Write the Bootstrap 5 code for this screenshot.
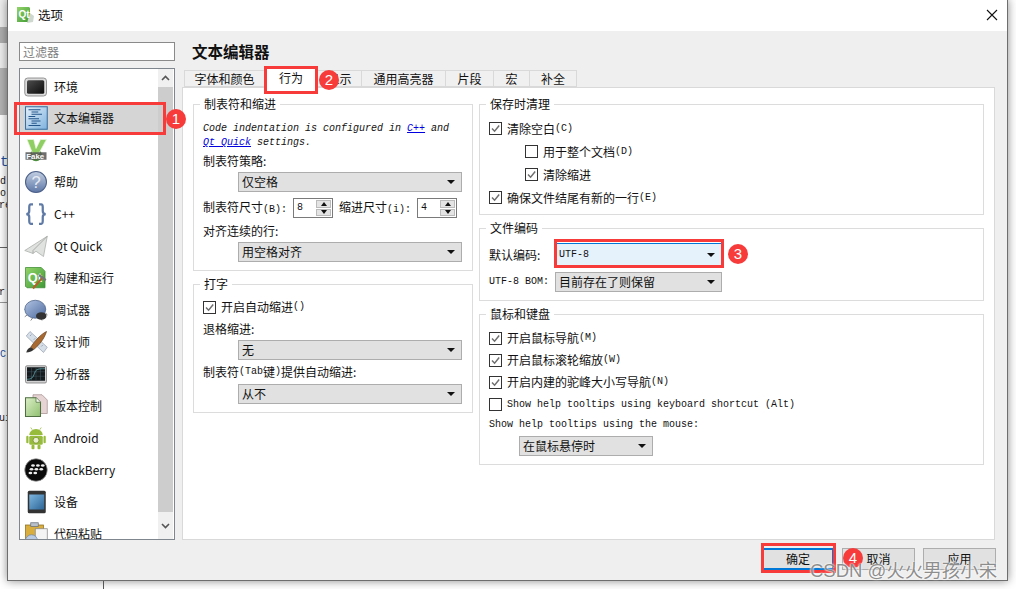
<!DOCTYPE html>
<html lang="zh-CN">
<head>
<meta charset="utf-8">
<title>选项</title>
<link href="https://cdn.jsdelivr.net/npm/bootstrap@5.3.0/dist/css/bootstrap.min.css" rel="stylesheet">
<style>
html,body{height:589px;overflow:hidden;background:#fff}
body{position:relative;font:12px/16px "Noto Sans CJK SC","Liberation Sans",sans-serif;color:#111}
.mn{font:10px/16px "Liberation Mono","Noto Sans CJK SC",monospace}
.desk{height:589px;overflow:hidden}
.strip{width:7px;flex:none;overflow:hidden;font:10px/12px "Liberation Mono",monospace;color:#222;white-space:nowrap}
.b1{height:27px;background:#eee}.b2{height:16px;background:#aeaeae}.b3{height:25px;background:#eee}.b4{height:47px;background:#b4b4b4}
.s-t{margin-top:39px;font-size:14px;line-height:16px;color:#1c4fa0}.s-d{margin-top:6px}.s-o{}.s-r{margin-left:-1px}
.s-line{margin-top:35px;border-top:1px solid #666}.s-r2{margin-top:39px;margin-left:-1px}.s-line2{margin-top:3px;border-top:1px solid #999}
.s-c{margin-top:46px;color:#1c4fa0}.s-u{margin-top:52px;margin-left:-1px}
.dlgcol{width:1001px;flex:none;position:relative}
.under{height:8px;margin-left:96px;border-left:1px solid #555}
.dlg{height:582px;margin-top:-1px;background:#efefef;border:1px solid #6e6e6e;box-shadow:0 0 9px rgba(0,0,0,.45)}
.dtitle{height:31px;background:#fff;padding:0 9px 2px 8px}
.dtitle svg.ti{margin-right:2px}
.dtitle .ttext{font-size:12.5px}
.dclose{margin-left:auto;background:none;border:0;padding:0;line-height:0}
.dmain{padding:11px 12px 0 11px}
.lcol{width:156px;flex:none;margin-right:7px}
.filter.form-control{height:19px;padding:0 3px;font-size:12px;line-height:16px;border:1px solid #8a8a8a;border-radius:0;background:#fff;box-shadow:none}
.filter::placeholder{color:#7d7d7d;opacity:1}
.catbox{height:472px;margin-top:7px;background:#fff;border:1px solid #7f868e;overflow:hidden}
.catlist.list-group{width:138px;border-radius:0;padding-top:2px;flex:none;height:470px;overflow:hidden;flex-wrap:nowrap}
.catlist .list-group-item{height:32px;flex:none;border:0;border-radius:0;padding:0 0 0 4px;background:transparent;color:#111;font-size:12px;display:flex;align-items:center;gap:6px}
.catlist .list-group-item.active{background:#d5d5d5;color:#111}
.cat-ic{width:24px;height:24px;flex:none}
.vbar{width:15px;flex:none;background:#f0f0f0;display:flex;flex-direction:column;align-items:center}
.vbtn{height:18px;flex:none;display:flex;align-items:center;justify-content:center;width:15px}
.vthumb{height:425px;width:15px;background:#cdcdcd;flex:none}
.rcol{width:813px;flex:none}
.pagehead{height:26px;font-size:15.5px;line-height:18px;font-weight:700;margin:0 0 0 10px;color:#111;padding-top:0}
.qtabs.nav-tabs{height:19px;padding-left:3px;border-bottom:0;flex-wrap:nowrap;align-items:flex-end;position:relative;z-index:2}
.qtabs .nav-link{height:17px;margin:0 0 0 -1px;padding:0;border:1px solid #d9d9d9;border-bottom:1px solid #d9d9d9;border-radius:0;background:#f0f0f0;color:#111;font-size:12px;line-height:15px;text-align:center}
.qtabs .nav-link.active{height:21px;margin-bottom:-1px;background:#fff;border-color:#d9d9d9 #d9d9d9 #fff;color:#111;line-height:20px}
.t1{width:81px}.t2{width:54px}.t3{width:45px}.t4{width:85px}.t5{width:49px}.t6{width:37px}.t7{width:48px}
.pane{height:453px;background:#fff;border:1px solid #d9d9d9;padding:8px 10px 0 10px}
.col-l{width:280px;flex:none;margin-right:6px}
.col-r{width:505px;flex:none}
.gbox{border:1px solid #dcdcdc;min-width:0;padding:0 9px;display:block}
.gbox legend{float:none;width:auto;height:16px;margin:0 0 0 -3px;padding:0 4px;font-size:12px;line-height:16px;color:#111}
.gap5{margin-top:5px}
.g1{padding-top:10px;padding-bottom:8px}
.g2{padding-top:4px;padding-bottom:8px}
.g3{padding-top:5px;padding-bottom:5px}
.g4{padding-top:7px;padding-bottom:8px}
.g5{padding-top:5px;padding-bottom:8px}
.itl{font:italic 10px/14px "Liberation Mono",monospace;color:#111;white-space:nowrap}
.itl a{color:#0000e0;text-decoration:underline}
.lrow{height:22px;display:flex;align-items:center;white-space:nowrap}
.lrow1{height:21px}
.lrow2{margin-top:1px}.lrow3{margin-top:2px}
.lrow-short{height:18px}
.mnrow{padding-top:2px}
.rrow{height:23px}
.qcombo{height:20px;background:#e1e1e1;border:1px solid #adadad;display:flex;align-items:center;justify-content:space-between;padding:0 5px 0 3px;font-size:12px;white-space:nowrap}
.qcombo::after{content:"";width:0;height:0;border:4px solid transparent;border-top:4px solid #111;border-bottom:0;margin-left:auto;margin-right:1px}
.c-l{width:224px;margin-left:35px}
.c-r{width:167px}
.c-h{width:134px;margin:3px 0 0 30px}
.c-f{height:23px;background:#e5f1fb;border-color:#0078d7;font:10px/16px "Liberation Mono",monospace}
.lab66{width:66px;flex:none}
.mt6{margin-top:6px}
.spinrow{height:20px;margin-top:6px;display:flex;align-items:center;white-space:nowrap}
.qspin{width:40px;height:20px;border:1px solid #7a7a7a;background:#fff;display:flex;align-items:stretch;justify-content:space-between;padding:1px;flex:none}
.qspin span.v{padding-left:2px;line-height:16px}
.qspin .ud{width:15px;display:flex;flex-direction:column;gap:1px}
.ud i{flex:1;background:#e4e4e4;border:1px solid #bbb;display:flex;align-items:center;justify-content:center}
.ud i::after{content:"";border:3px solid transparent}
.ud i.up::after{border-top:0;border-bottom:4px solid #111}
.ud i.dn::after{border-bottom:0;border-top:4px solid #111}
.spl1{width:90px;flex:none}.spl2{width:78px;flex:none;margin-left:6px}
.qchk{width:13px;height:13px;background:#fff;border:1px solid #333;display:inline-flex;flex:none;margin-right:5px;align-items:center;justify-content:center;line-height:0}
.ind{margin-left:36px}
.btnrow{padding:8px 0 0;margin-right:-1px;justify-content:flex-end;gap:8px}
.qbtn.btn{width:73px;height:22px;padding:0;background:#e1e1e1;border:1px solid #adadad;border-radius:0;color:#111;font-size:12px;line-height:20px;box-shadow:none}
.qbtn.btn.def{width:70px;margin-right:1px;border-color:#0078d7;border-width:2px 1px;line-height:18px}
.rmark{position:absolute;border:3px solid #f73b3b;pointer-events:none;z-index:5}
.m1{left:14px;top:102px;width:152px;height:33px}
.m2{left:264px;top:66px;width:54px;height:28px}
.m3{left:554px;top:239px;width:170px;height:29px}
.m4{left:761px;top:543px;width:75px;height:30px}
.rdot{position:absolute;width:20px;height:20px;border-radius:50%;background:#f73b3b;color:#fff;font:400 15px/20px "Liberation Sans",sans-serif;text-align:center;z-index:6}
.d1{left:166px;top:109px}.d2{left:319px;top:70px}.d3{left:728px;top:244px}.d4{left:843px;top:548px}
.wmark{position:absolute;left:810px;top:558px;font:18.5px/26px "Liberation Sans","Noto Sans CJK SC",sans-serif;color:rgba(105,105,105,.75);text-shadow:0 0 2px #fff,0 0 2px #fff;white-space:nowrap;z-index:7}
</style>
</head>
<body>
<svg width="0" height="0" class="position-absolute">
<defs>
<symbol id="ck" viewBox="0 0 11 11"><path d="M2 5.5 4.6 8.2 9.2 2.6" fill="none" stroke="#6f6f6f" stroke-width="1.5"/></symbol>
<linearGradient id="gScr" x1="0" y1="0" x2="1" y2="1"><stop offset="0" stop-color="#4d4d4d"/><stop offset="1" stop-color="#0c0c0c"/></linearGradient>
<linearGradient id="gDoc" x1="0" y1="0" x2="1" y2="1"><stop offset="0" stop-color="#e4f0fb"/><stop offset="1" stop-color="#7fb2dd"/></linearGradient>
<linearGradient id="gHelp" x1="0" y1="0" x2="0" y2="1"><stop offset="0" stop-color="#c3cfe2"/><stop offset="1" stop-color="#5d77a6"/></linearGradient>
<linearGradient id="gQt" x1="0" y1="0" x2="1" y2="1"><stop offset="0" stop-color="#93d46a"/><stop offset="1" stop-color="#3f9a35"/></linearGradient>
<linearGradient id="gBug" x1="0" y1="0" x2="1" y2="1"><stop offset="0" stop-color="#b2c4e2"/><stop offset="1" stop-color="#4c6a9f"/></linearGradient>
<linearGradient id="gTab" x1="0" y1="0" x2="1" y2="1"><stop offset="0" stop-color="#7db5df"/><stop offset="1" stop-color="#2c6596"/></linearGradient>
<linearGradient id="gPg" x1="0" y1="0" x2="1" y2="1"><stop offset="0" stop-color="#dcefc7"/><stop offset="1" stop-color="#8fbf70"/></linearGradient>
</defs>
</svg>
<div class="desk d-flex">
  <div class="strip">
    <div class="b1"></div><div class="b2"></div><div class="b3"></div><div class="b4"></div>
    <div class="s-t">t</div>
    <div class="s-d">d</div><div class="s-o">o</div><div class="s-r">re</div>
    <div class="s-line"></div><div class="s-r2">r</div><div class="s-line2"></div>
    <div class="s-c">C</div><div class="s-u">ui</div>
  </div>
  <div class="dlgcol">
    <div class="dlg">
      <div class="dtitle d-flex align-items-center">
        <svg class="ti" width="20" height="18" viewBox="0 0 20 18"><path d="M1 1h12l1 1v11l-2 3H1z" fill="url(#gQt)"/><path d="M14 7l4 3-1 6-6 1z" fill="#cfd8cf"/><text x="2.5" y="12" font-family="Liberation Sans" font-weight="700" font-size="10" fill="#fff">Qt</text></svg>
        <span class="ttext">选项</span>
        <button class="dclose" type="button" aria-label="关闭"><svg width="12" height="12" viewBox="0 0 12 12"><path d="M1 1 11 11M11 1 1 11" stroke="#111" stroke-width="1.1"/></svg></button>
      </div>
      <div class="dmain d-flex">
        <div class="lcol">
          <input class="form-control filter" type="text" placeholder="过滤器">
          <div class="catbox d-flex">
            <div class="list-group catlist">
              <div class="list-group-item"><svg class="cat-ic" viewBox="0 0 32 32"><rect x="1" y="4" width="29" height="24" rx="4" fill="#dcdcdc" stroke="#777"/><rect x="4" y="7" width="23" height="18" rx="2" fill="url(#gScr)"/></svg>环境</div>
              <div class="list-group-item active"><svg class="cat-ic" viewBox="0 0 32 32"><rect x="2" y="1" width="29" height="30" fill="url(#gDoc)" stroke="#3b6fa0" stroke-width="1.4"/><path d="M6 5h16M10 8h9M10 11h14M6 14h9M6 17h14M10 20h12M10 23h7M6 26h16" stroke="#24558a" stroke-width="1.5"/></svg>文本编辑器</div>
              <div class="list-group-item"><svg class="cat-ic" viewBox="0 0 32 32"><circle cx="16" cy="23" r="8" fill="#4c8f3c"/><path d="M4 2h9l3 12 6-12h8L19 22h-7z" fill="#8fce62" stroke="#e9f5df"/><rect x="2" y="19" width="28" height="10" fill="#555" opacity=".85"/><text x="3" y="28" font-family="Liberation Sans" font-weight="700" font-size="10.5" fill="#fff">Fake</text></svg>FakeVim</div>
              <div class="list-group-item"><svg class="cat-ic" viewBox="0 0 32 32"><circle cx="16" cy="16" r="14" fill="url(#gHelp)" stroke="#4d618a" stroke-width="1.4"/><text x="16" y="24" text-anchor="middle" font-family="Liberation Sans" font-size="22" fill="#e6ebf3">?</text></svg>帮助</div>
              <div class="list-group-item"><svg class="cat-ic" viewBox="0 0 32 32"><g fill="none" stroke="#5f7aa5" stroke-width="3"><path d="M12 3H9C7 3 7 5 7 7v5c0 3-2 4-4 4 2 0 4 1 4 4v5c0 2 0 4 2 4h3"/><path d="M20 3h3c2 0 2 2 2 4v5c0 3 2 4 4 4-2 0-4 1-4 4v5c0 2 0 4-2 4h-3"/></g></svg>C++</div>
              <div class="list-group-item"><svg class="cat-ic" viewBox="0 0 32 32"><path d="M1 22 31 3 26 30 16 23 12 26z" fill="#dfe2df" stroke="#a8aca8"/><path d="M31 3 12 22v4" fill="none" stroke="#999"/></svg>Qt Quick</div>
              <div class="list-group-item"><svg class="cat-ic" viewBox="0 0 32 32"><path d="M2 2h21l5 5v22H4l-2-2z" fill="url(#gQt)" stroke="#3c8c33"/><text x="5" y="21" font-family="Liberation Sans" font-weight="700" font-size="17" fill="#fff">Qt</text><path d="M12 30 25 15" stroke="#b5622a" stroke-width="2.6"/><path d="M20 12l9 7" stroke="#777" stroke-width="3"/></svg>构建和运行</div>
              <div class="list-group-item"><svg class="cat-ic" viewBox="0 0 32 32"><path d="M4 18 1 15M5 22 1 25M12 26l-3 4M22 27l2 3M29 20l2 3" stroke="#777" stroke-width="1.2"/><ellipse cx="15" cy="15" rx="14" ry="12" fill="url(#gBug)" stroke="#4a5f85"/><ellipse cx="23" cy="24" rx="7" ry="5" fill="#333"/></svg>调试器</div>
              <div class="list-group-item"><svg class="cat-ic" viewBox="0 0 32 32"><path d="M3 8 8 2 31 23 26 30z" fill="#d6dee8" stroke="#9aa6b4"/><path d="M8 8l2-2M13 13l2-2M18 17l2-2M23 22l2-2" stroke="#8794a3"/><path d="M30 2C22 6 14 15 9 23l4 3C20 20 27 12 30 2z" fill="#a86a31" stroke="#6d431c"/><path d="M9 23c-3 1-5 3-6 7 4 0 7-1 10-4z" fill="#333"/></svg>设计师</div>
              <div class="list-group-item"><svg class="cat-ic" viewBox="0 0 32 32"><rect x="2" y="5" width="28" height="23" rx="2" fill="#d0d0d0" stroke="#777"/><rect x="4" y="7" width="24" height="18" fill="#151a1c"/><path d="M10 7v18M16 7v18M22 7v18M4 13h24M4 19h24" stroke="#3e5560" stroke-width=".7"/><path d="M4 23c6 0 8-2 10-8s5-6 14-6" fill="none" stroke="#65b0b8"/></svg>分析器</div>
              <div class="list-group-item"><svg class="cat-ic" viewBox="0 0 32 32"><path d="M12 1h12l7 7v18H12z" fill="#e6d3d3" stroke="#a79090"/><path d="M2 5h14l6 6v19H2z" fill="url(#gPg)" stroke="#4f6e41" stroke-width="1.4"/><path d="M16 5v6h6" fill="#f2f8ea" stroke="#4f6e41"/></svg>版本控制</div>
              <div class="list-group-item"><svg class="cat-ic" viewBox="0 0 32 32"><g fill="#97bb3b"><path d="M7 12a9 8 0 0 1 18 0z"/><rect x="7" y="13" width="18" height="12" rx="2"/><rect x="3" y="13" width="3" height="10" rx="1.5"/><rect x="26" y="13" width="3" height="10" rx="1.5"/><rect x="10" y="25" width="4" height="6" rx="1.5"/><rect x="18" y="25" width="4" height="6" rx="1.5"/></g><path d="M11 5 9 2M21 5l2-3" stroke="#97bb3b"/><circle cx="16" cy="19" r="4" fill="#e8edd0" stroke="#6f8a2a"/></svg>Android</div>
              <div class="list-group-item"><svg class="cat-ic" viewBox="0 0 32 32"><circle cx="16" cy="16" r="15" fill="#0b0b0b" stroke="#999"/><g fill="#eee"><ellipse cx="12" cy="10" rx="2.5" ry="1.7"/><ellipse cx="18.5" cy="10" rx="2.5" ry="1.7"/><ellipse cx="25" cy="10" rx="2.5" ry="1.7"/><ellipse cx="10" cy="15" rx="2.5" ry="1.7"/><ellipse cx="16.5" cy="15" rx="2.5" ry="1.7"/><ellipse cx="23" cy="15" rx="2.5" ry="1.7"/><ellipse cx="8.5" cy="20" rx="2.5" ry="1.7"/><ellipse cx="15" cy="20" rx="2.5" ry="1.7"/></g></svg>BlackBerry</div>
              <div class="list-group-item"><svg class="cat-ic" viewBox="0 0 32 32"><rect x="5" y="1" width="24" height="30" rx="2" fill="#333"/><rect x="7" y="6" width="20" height="20" fill="url(#gTab)"/></svg>设备</div>
              <div class="list-group-item"><svg class="cat-ic" viewBox="0 0 32 32"><rect x="2" y="4" width="24" height="27" fill="#d9ad3e" stroke="#8e6d1e"/><rect x="9" y="1" width="10" height="5" fill="#b9c2cc" stroke="#6a7078"/><rect x="15" y="9" width="16" height="20" fill="#f4f4f4" stroke="#888"/><circle cx="10" cy="25" r="8" fill="#b9cbe3" stroke="#7288a8"/></svg>代码粘贴</div>
            </div>
            <div class="vbar">
              <div class="vbtn"><svg width="9" height="6" viewBox="0 0 9 6"><path d="M1 5 4.5 1.5 8 5" fill="none" stroke="#555" stroke-width="1.6"/></svg></div>
              <div class="vthumb"></div>
              <div class="vbtn flex-grow-1"><svg width="9" height="6" viewBox="0 0 9 6"><path d="M1 1 4.5 4.5 8 1" fill="none" stroke="#555" stroke-width="1.6"/></svg></div>
            </div>
          </div>
        </div>
        <div class="rcol">
          <h1 class="pagehead">文本编辑器</h1>
          <ul class="nav nav-tabs qtabs">
            <li class="nav-item"><a class="nav-link t1" href="#">字体和颜色</a></li>
            <li class="nav-item"><a class="nav-link active t2" href="#">行为</a></li>
            <li class="nav-item"><a class="nav-link t3" href="#">显示</a></li>
            <li class="nav-item"><a class="nav-link t4" href="#">通用高亮器</a></li>
            <li class="nav-item"><a class="nav-link t5" href="#">片段</a></li>
            <li class="nav-item"><a class="nav-link t6" href="#">宏</a></li>
            <li class="nav-item"><a class="nav-link t7" href="#">补全</a></li>
          </ul>
          <div class="pane d-flex">
            <div class="col-l">
              <fieldset class="gbox g1">
                <legend>制表符和缩进</legend>
                <div class="itl">Code indentation is configured in <a href="#">C++</a> and</div>
                <div class="itl"><a href="#">Qt Quick</a> settings.</div>
                <div class="lrow lrow1">制表符策略:</div>
                <div class="qcombo c-l lrow2">仅空格</div>
                <div class="spinrow">
                  <span class="spl1">制表符尺寸<span class="mn">(B):</span></span>
                  <div class="qspin"><span class="v mn">8</span><span class="ud"><i class="up"></i><i class="dn"></i></span></div>
                  <span class="spl2">缩进尺寸<span class="mn">(i):</span></span>
                  <div class="qspin"><span class="v mn">4</span><span class="ud"><i class="up"></i><i class="dn"></i></span></div>
                </div>
                <div class="lrow lrow3">对齐连续的行:</div>
                <div class="qcombo c-l">用空格对齐</div>
              </fieldset>
              <fieldset class="gbox g2 gap5">
                <legend>打字</legend>
                <div class="lrow"><span class="qchk"><svg width="11" height="11"><use href="#ck"/></svg></span>开启自动缩进<span class="mn">()</span></div>
                <div class="lrow">退格缩进:</div>
                <div class="qcombo c-l">无</div>
                <div class="lrow lrow2">制表符<span class="mn">(Tab</span>键<span class="mn">)</span>提供自动缩进:</div>
                <div class="qcombo c-l lrow2">从不</div>
              </fieldset>
            </div>
            <div class="col-r">
              <fieldset class="gbox g3">
                <legend>保存时清理</legend>
                <div class="lrow rrow"><span class="qchk"><svg width="11" height="11"><use href="#ck"/></svg></span>清除空白<span class="mn">(C)</span></div>
                <div class="lrow rrow ind"><span class="qchk"></span>用于整个文档<span class="mn">(D)</span></div>
                <div class="lrow rrow ind"><span class="qchk"><svg width="11" height="11"><use href="#ck"/></svg></span>清除缩进</div>
                <div class="lrow rrow"><span class="qchk"><svg width="11" height="11"><use href="#ck"/></svg></span>确保文件结尾有新的一行<span class="mn">(E)</span></div>
              </fieldset>
              <fieldset class="gbox g4 gap5">
                <legend>文件编码</legend>
                <div class="d-flex align-items-center"><span class="lab66">默认编码:</span><div class="qcombo c-r c-f">UTF-8</div></div>
                <div class="d-flex align-items-center mt6"><span class="lab66 mn">UTF-8 BOM:</span><div class="qcombo c-r">目前存在了则保留</div></div>
              </fieldset>
              <fieldset class="gbox g5 gap5">
                <legend>鼠标和键盘</legend>
                <div class="lrow"><span class="qchk"><svg width="11" height="11"><use href="#ck"/></svg></span>开启鼠标导航<span class="mn">(M)</span></div>
                <div class="lrow"><span class="qchk"><svg width="11" height="11"><use href="#ck"/></svg></span>开启鼠标滚轮缩放<span class="mn">(W)</span></div>
                <div class="lrow"><span class="qchk"><svg width="11" height="11"><use href="#ck"/></svg></span>开启内建的驼峰大小写导航<span class="mn">(N)</span></div>
                <div class="lrow"><span class="qchk"></span><span class="mn mnrow">Show help tooltips using keyboard shortcut (Alt)</span></div>
                <div class="lrow lrow-short mn mnrow">Show help tooltips using the mouse:</div>
                <div class="qcombo c-h">在鼠标悬停时</div>
              </fieldset>
            </div>
          </div>
          <div class="d-flex btnrow">
            <button type="button" class="btn qbtn def">确定</button>
            <button type="button" class="btn qbtn">取消</button>
            <button type="button" class="btn qbtn">应用</button>
          </div>
        </div>
      </div>
    </div>
    <div class="under"></div>
  </div>
</div>
<div class="rmark m1"></div><div class="rmark m2"></div><div class="rmark m3"></div><div class="rmark m4"></div>
<div class="rdot d1">1</div><div class="rdot d2">2</div><div class="rdot d3">3</div><div class="rdot d4">4</div>
<div class="wmark">CSDN @火火男孩小宋</div>
</body>
</html>
